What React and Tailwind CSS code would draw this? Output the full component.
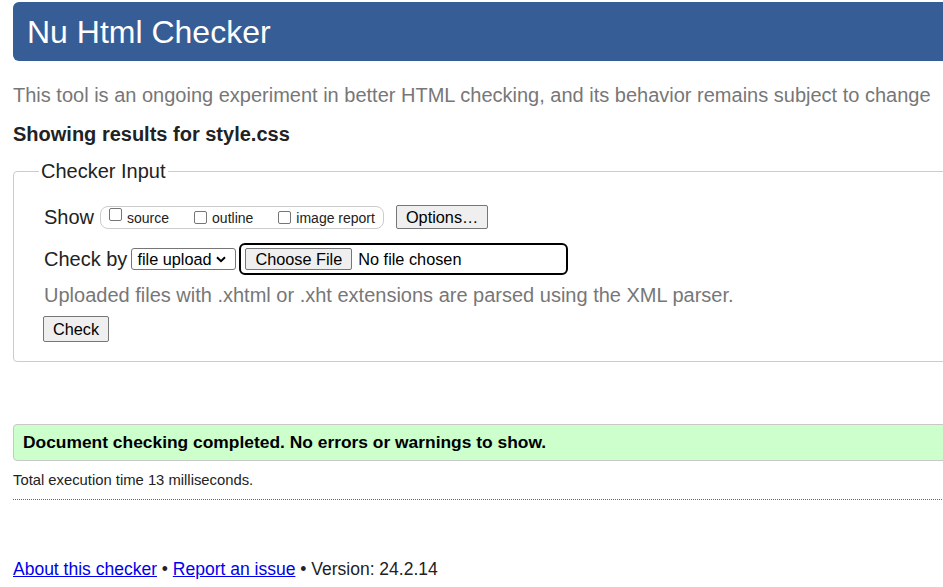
import React from "react";

function Checkbox() {
  return (
    <span className="inline-block w-[13px] h-[13px] border border-[#767676] rounded-[2px] bg-white mt-[1px] shrink-0" />
  );
}

function Btn({ children, className = "" }) {
  return (
    <span
      className={
        "inline-flex items-center bg-[#efefef] border border-[#767676] rounded-[2px] px-[9px] text-[16.3px] text-black " +
        className
      }
    >
      {children}
    </span>
  );
}

export default function App() {
  return (
    <div
      className="w-[943px] h-[587px] overflow-hidden bg-white text-[#222]"
      style={{ fontFamily: '"Liberation Sans", Arial, sans-serif' }}
    >
      <div className="w-[990px] pl-[13px]">
        <div className="mt-[2px] h-[59px] rounded-[6px] bg-[#365d95] pl-[14px] flex items-center">
          <h1 className="text-[32px] leading-[36px] text-white font-normal">Nu Html Checker</h1>
        </div>

        <p className="mt-[22px] text-[20px] leading-[24px] text-[#777] whitespace-nowrap">
          This tool is an ongoing experiment in better HTML checking, and its behavior remains subject to change
        </p>

        <h2 className="mt-[15px] text-[20px] leading-[24px] font-bold text-[#222]">Showing results for style.css</h2>

        <fieldset className="mt-[13px] border border-[#ccc] rounded-[4px] px-[30px] pb-[19px]">
          <legend className="-ml-[5px] px-[2px] text-[20px] leading-[24px] text-[#222]">Checker Input</legend>

          <div className="mt-[22px] flex items-center h-[24px]">
            <span className="text-[20px] leading-[24px]">Show</span>
            <div className="ml-[6px] h-[23px] border border-[#ccc] rounded-[8px] flex items-start pl-[8px] pr-[8px]">
              <Checkbox />
              <span className="ml-[5px] mt-[3px] text-[14px] leading-[16px]">source</span>
              <span className="ml-[25px]"><Checkbox /></span>
              <span className="ml-[5px] mt-[3px] text-[14px] leading-[16px]">outline</span>
              <span className="ml-[25px]"><Checkbox /></span>
              <span className="ml-[5px] mt-[3px] text-[14px] leading-[16px]">image report</span>
            </div>
            <Btn className="ml-[12px] h-[24px]">Options…</Btn>
          </div>

          <div className="mt-[14px] flex items-center h-[32px]">
            <span className="text-[20px] leading-[24px]">Check by</span>
            <span className="ml-[4px] h-[22px] w-[105px] border border-[#767676] rounded-[3px] flex items-center pl-[5px] text-[16.3px] text-black">
              <span>file upload</span>
              <svg className="ml-[4px]" width="10" height="7" viewBox="0 0 10 7">
                <path d="M1 1.2 L5 5.2 L9 1.2" fill="none" stroke="#000" strokeWidth="2" />
              </svg>
            </span>
            <div className="ml-[3px] h-[32px] w-[329px] border-2 border-black rounded-[6px] flex items-center pl-[4px]">
              <Btn className="h-[22px]">Choose File</Btn>
              <span className="ml-[6px] text-[16.3px] text-black">No file chosen</span>
            </div>
          </div>

          <p className="mt-[8px] text-[20px] leading-[24px] text-[#777]">
            Uploaded files with .xhtml or .xht extensions are parsed using the XML parser.
          </p>

          <div className="mt-[9px] -ml-[1px] flex">
            <Btn className="h-[26px]">Check</Btn>
          </div>
        </fieldset>

        <div className="mt-[62px] h-[37px] bg-[#ccffcc] border border-[#c8c8c8] rounded-[4px] pl-[9px] flex items-center">
          <p className="text-[17.4px] font-bold text-black">Document checking completed. No errors or warnings to show.</p>
        </div>

        <p className="mt-[11px] text-[14.8px] leading-[16px] text-[#222]">Total execution time 13 milliseconds.</p>

        <div className="mt-[11px] border-t border-dotted border-[#666]" />

        <p className="mt-[59px] text-[17.5px] leading-[20px] text-[#222]">
          <a href="#" className="text-[#0000ee] underline">About this checker</a>
          {" • "}
          <a href="#" className="text-[#0000ee] underline">Report an issue</a>
          {" • Version: 24.2.14"}
        </p>
      </div>
    </div>
  );
}
